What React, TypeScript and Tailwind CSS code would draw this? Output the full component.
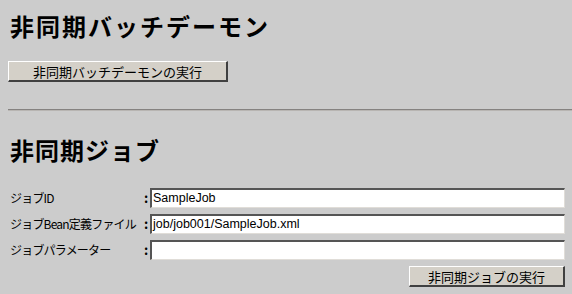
export default function App() {
  const font = { fontFamily: '"Noto Sans CJK JP", "Liberation Sans", sans-serif' };
  return (
    <div className="w-[572px] h-[294px] bg-[#cccccc] text-black overflow-hidden" style={font}>
      <div className="pl-[10px] pt-[11px]">
        <h2 className="text-[24px] leading-[30px] font-bold tracking-[2px]">非同期バッチデーモン</h2>
      </div>
      <div className="pl-[8px] pt-[17px]">
        <button className="w-[220px] h-[21px] bg-[#d4d0c8] border-t border-l border-white border-r-2 border-b-2 border-r-[#404040] border-b-[#404040] text-[13px] leading-[17px] pt-[1px]">
          非同期バッチデーモンの実行
        </button>
      </div>
      <div className="ml-[8px] mt-[27px] h-[2px] border-t border-t-[#858280] border-b border-b-[#b8b5b2]" />
      <div className="pl-[10px] pt-[24px]">
        <h2 className="text-[24px] leading-[30px] font-bold tracking-[1px]">非同期ジョブ</h2>
      </div>
      <div className="pl-[10px] pr-[7px] pt-[23px] flex flex-col gap-[6px] text-[12px]">
        {[
          ["ジョブID", "SampleJob"],
          ["ジョブBean定義ファイル", "job/job001/SampleJob.xml"],
          ["ジョブパラメーター", ""],
        ].map(([label, value]) => (
          <div key={label} className="flex items-center h-[20px]">
            <span className="w-[134px] leading-[20px] tracking-[-0.8px]">{label}</span>
            <span className="w-[6px] font-bold text-[13px]">:</span>
            <div className="flex-1 h-[20px] bg-white border-t-2 border-l-2 border-t-[#555555] border-l-[#555555] border-b border-r border-b-[#e0ddd8] border-r-[#e0ddd8] pl-[1px] text-[12.5px] leading-[17px]" style={{ fontFamily: '"Liberation Sans", sans-serif' }}>
              {value}
            </div>
          </div>
        ))}
        <div className="flex justify-end">
          <button className="w-[156px] h-[21px] bg-[#d4d0c8] border-t border-l border-white border-r-2 border-b-2 border-r-[#404040] border-b-[#404040] text-[13px] leading-[17px] pt-[1px]">
            非同期ジョブの実行
          </button>
        </div>
      </div>
    </div>
  );
}
